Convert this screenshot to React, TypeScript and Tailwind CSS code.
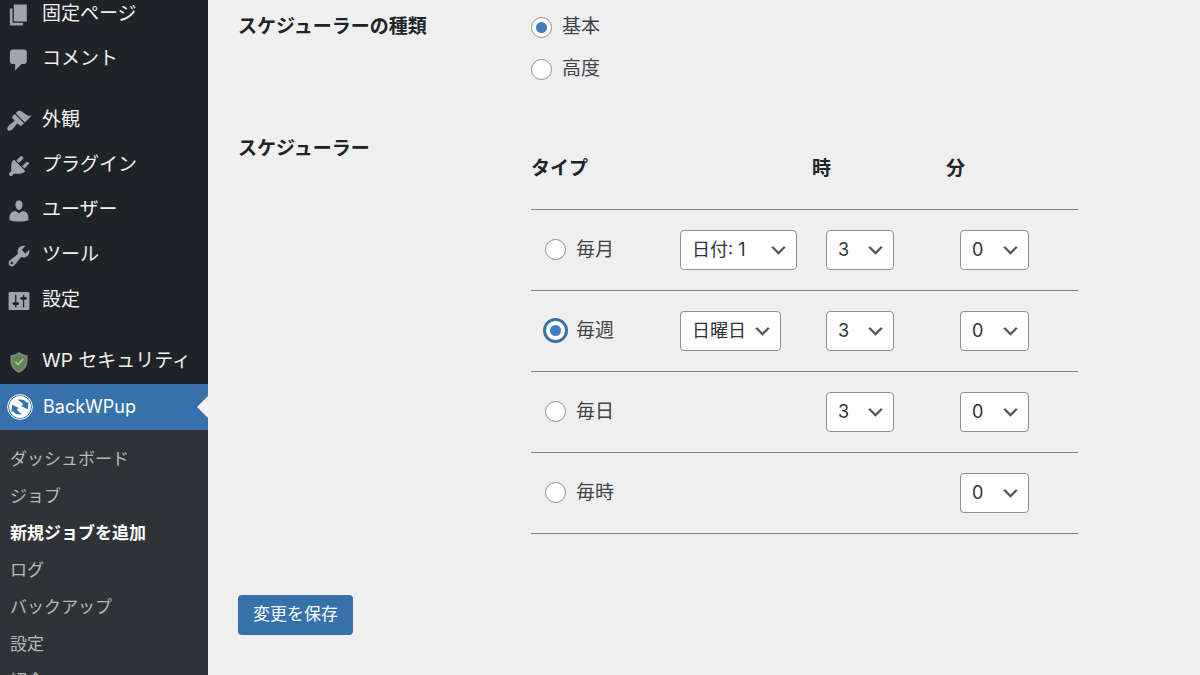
import { type ReactNode } from "react";

const menuFont = "font-['Inter','Noto_Sans_CJK_JP',sans-serif]";

function DashIcon({ d }: { d: string }) {
  return (
    <svg viewBox="0 0 20 20" className="size-[26px] shrink-0 fill-[#a0a5aa]" aria-hidden="true">
      <path d={d} />
    </svg>
  );
}

function ShieldIcon() {
  return (
    <svg viewBox="0 0 26 26" className="size-[26px] shrink-0" aria-hidden="true">
      <path d="M13 3 C10.5 5 7.500 6 4.5 6.2 V12 C4.5 17.5 8 21.5 13 24 C18 21.5 21.5 17.5 21.5 12 V6.2 C18.5 6 15.5 5 13 3Z" fill="#7f868b" />
      <path d="M13 5 C11 6.7 8.7 7.5 6.3 7.8 V12 C6.3 16.5 9 19.8 13 22 C17 19.8 19.7 16.5 19.7 12 V7.8 C17.3 7.5 15 6.7 13 5Z" fill="#5d8848" />
      <path d="M9.5 12.8 L12.2 15.5 L17 10" fill="none" stroke="#b4c6a8" strokeWidth="1.6" />
    </svg>
  );
}

function BackupIcon() {
  const arrow = "M10.5 6 C14.500 4.800 18 6 19.800 8.800 L21.500 8 L20.800 15.200 L14 12 L16.200 10.800 C15.200 8.500 13 7 10.500 6Z";
  return (
    <svg viewBox="0 0 26 26" className="size-[26px] shrink-0" aria-hidden="true">
      <circle cx="13" cy="13" r="12.4" fill="none" stroke="#fff" strokeWidth="1" />
      <circle cx="13" cy="13" r="10.9" fill="#fff" />
      <path d={arrow} fill="#3671ac" />
      <path d={arrow} fill="#3671ac" transform="rotate(180 13 13)" />
    </svg>
  );
}

const icons = {
  page: "M6 15V2h10v13H6zm-1 1h8v2H3V5h2v11z",
  comments: "M5 2h9c1.1 0 2 .9 2 2v7c0 1.1-.9 2-2 2h-2l-5 5v-5H5c-1.1 0-2-.9-2-2V4c0-1.1.9-2 2-2z",
  appearance:
    "M14.48 11.06L7.41 3.99l1.5-1.5c.5-.56 2.3-.47 3.51.32 1.21.8 1.43 1.28 2.91 2.1 1.18.64 2.45 1.26 4.45.85zm-.71.71L6.7 4.7 4.93 6.47c-.39.39-.39 1.02 0 1.41l1.06 1.06c.39.39.39 1.03 0 1.42-.6.6-1.43 1.11-2.21 1.69-.35.26-.7.53-1.01.84C1.43 14.23.4 16.08 1.4 17.07c.99 1 2.84-.03 4.18-1.36.31-.31.58-.66.85-1.02.57-.78 1.08-1.61 1.69-2.21.39-.39 1.02-.39 1.41 0l1.06 1.06c.39.39 1.02.39 1.41 0z",
  plugins:
    "M13.11 4.36L9.87 7.6 8 5.73l3.24-3.24c.35-.34 1.05-.2 1.56.32.52.51.66 1.21.31 1.55zm-8 1.77l.91-1.12 9.01 9.01-1.19.84c-.71.71-2.63 1.16-3.82 1.16H6.14L4.9 17.26c-.59.59-1.54.59-2.12 0-.59-.58-.59-1.53 0-2.12l1.24-1.24v-3.88c0-1.13.4-3.19 1.09-3.89zm7.26 3.97l3.24-3.24c.34-.35 1.04-.21 1.55.31.52.51.66 1.21.31 1.55l-3.24 3.25z",
  users:
    "M10 9.25c-2.27 0-2.73-3.44-2.73-3.44C7 4.02 7.82 2 9.97 2c2.16 0 2.98 2.02 2.71 3.81 0 0-.41 3.44-2.68 3.44zm0 2.57L12.72 10c2.39 0 4.52 2.33 4.52 4.53v2.49s-3.65 1.13-7.24 1.13c-3.65 0-7.24-1.13-7.24-1.13v-2.49c0-2.25 1.94-4.48 4.47-4.48z",
  tools:
    "M16.68 9.77c-1.34 1.34-3.3 1.67-4.95.99l-5.41 6.52c-.99.99-2.59.99-3.58 0s-.99-2.59 0-3.57l6.52-5.42c-.68-1.65-.35-3.61.99-4.95 1.28-1.28 3.12-1.62 4.72-1.06l-2.89 2.89 2.82 2.82 2.86-2.87c.53 1.58.18 3.39-1.08 4.65zM3.81 16.21c.4.39 1.04.39 1.43 0 .4-.4.4-1.04 0-1.43-.39-.4-1.03-.4-1.43 0-.39.39-.39 1.03 0 1.43z",
  settings:
    "M18 16V4c0-.55-.45-1-1-1H3c-.55 0-1 .45-1 1v12c0 .55.45 1 1 1h14c.55 0 1-.45 1-1zM8 11h1c.55 0 1 .45 1 1s-.45 1-1 1H8v1.5c0 .28-.22.5-.5.5s-.5-.22-.5-.5V13H6c-.55 0-1-.45-1-1s.45-1 1-1h1V5.5c0-.28.22-.5.5-.5s.5.22.5.5V11zm5-2h-1c-.55 0-1-.45-1-1s.45-1 1-1h1V5.5c0-.28.22-.5.5-.5s.5.22.5.5V7h1c.55 0 1 .45 1 1s-.45 1-1 1h-1v5.5c0 .28-.22.5-.5.5s-.5-.22-.5-.5V9z",
};

const menuGroups: { label: string; icon: ReactNode }[][] = [
  [
    { label: "固定ページ", icon: <DashIcon d={icons.page} /> },
    { label: "コメント", icon: <DashIcon d={icons.comments} /> },
  ],
  [
    { label: "外観", icon: <DashIcon d={icons.appearance} /> },
    { label: "プラグイン", icon: <DashIcon d={icons.plugins} /> },
    { label: "ユーザー", icon: <DashIcon d={icons.users} /> },
    { label: "ツール", icon: <DashIcon d={icons.tools} /> },
    { label: "設定", icon: <DashIcon d={icons.settings} /> },
  ],
  [{ label: "WP セキュリティ", icon: <ShieldIcon /> }],
];

const submenu = ["ダッシュボード", "ジョブ", "新規ジョブを追加", "ログ", "バックアップ", "設定", "紹介"];

function Sidebar() {
  return (
    <nav className="w-52 shrink-0 overflow-hidden bg-[#1f2327] text-[#f0f0f1]">
      <div className="-mt-2 flex flex-col gap-4">
        {menuGroups.map((group, i) => (
          <ul key={i}>
            {group.map((item) => (
              <li key={item.label}>
                <a href="#" className="flex h-[45px] items-center gap-2.5 pl-1.5 text-[19px] whitespace-nowrap">
                  {item.icon}
                  {item.label}
                </a>
              </li>
            ))}
          </ul>
        ))}
      </div>

      {/* Open plugin menu */}
      <a
        href="#"
        aria-current="true"
        className="relative flex h-[46px] items-center gap-2.5 bg-[#3671ac] pl-[7px] text-lg text-white"
      >
        <BackupIcon />
        BackWPup
        <span className="absolute top-1/2 right-0 size-0 -translate-y-1/2 border-y-11 border-r-11 border-y-transparent border-r-[#efefef]" />
      </a>
      <ul className="h-full bg-[#2f3338] pt-[11px]">
        {submenu.map((label) => (
          <li key={label}>
            <a
              href="#"
              className={`flex h-[37px] items-center pl-2.5 text-[17px] ${
                label === "新規ジョブを追加" ? "font-bold text-white" : "text-[#b4b9be]"
              }`}
            >
              {label}
            </a>
          </li>
        ))}
      </ul>
    </nav>
  );
}

type RadioProps = { name: string; label: string; checked?: boolean; focused?: boolean };

function Radio({ name, label, checked, focused }: RadioProps) {
  return (
    <label className="flex items-center gap-2.5 text-[19px] leading-6 text-[#3c434a]">
      <input
        type="radio"
        name={name}
        defaultChecked={checked}
        className={`grid size-[21px] shrink-0 appearance-none place-items-center rounded-full border bg-white checked:before:size-[11px] checked:before:rounded-full checked:before:bg-[#3f7dc0] checked:before:content-[''] ${
          focused ? "border-[#3671ac] ring-2 ring-[#3671ac]" : "border-[#8c8f94]"
        }`}
      />
      {label}
    </label>
  );
}

function Select({ label, value, width }: { label: string; value: string; width: string }) {
  return (
    <div className={`relative ${width}`}>
      <select
        aria-label={label}
        className="block h-10 w-full appearance-none rounded border border-[#8c8f94] bg-white pl-[11px] text-lg text-[#2c3338]"
      >
        <option>{value}</option>
      </select>
      <svg
        viewBox="0 0 20 20"
        className="pointer-events-none absolute top-2.5 right-2 size-[21px] fill-[#555]"
        aria-hidden="true"
      >
        <path d="M5 6l5 5 5-5 2 1-7 7-7-7 2-1z" />
      </svg>
    </div>
  );
}

const schedules = [
  { label: "毎月", day: "日付: 1", dayWidth: "w-[117px]", hour: "3", minute: "0" },
  { label: "毎週", day: "日曜日", dayWidth: "w-[101px]", hour: "3", minute: "0", active: true },
  { label: "毎日", hour: "3", minute: "0" },
  { label: "毎時", minute: "0" },
];

function ScheduleTable() {
  return (
    <table className="w-full max-w-[547px] table-fixed border-collapse text-left text-[19px]">
      <colgroup>
        <col className="w-[135px]" />
        <col className="w-[146px]" />
        <col className="w-[134px]" />
        <col />
      </colgroup>
      <thead>
        <tr className="h-[81px] border-b border-[#7e8184] text-[#1d2327]">
          <th colSpan={2} className="pt-0.5 font-bold">タイプ</th>
          <th className="pt-0.5 font-bold">時</th>
          <th className="pt-0.5 font-bold">分</th>
        </tr>
      </thead>
      <tbody>
        {schedules.map((row) => (
          <tr key={row.label} className="h-[81px] border-b border-[#7e8184]">
            <td className="pl-3.5">
              <Radio name="cronbtype" label={row.label} checked={row.active} focused={row.active} />
            </td>
            <td className="pl-3.5">
              {row.day && <Select label={`${row.label} 日`} value={row.day} width={row.dayWidth} />}
            </td>
            <td className="pl-3.5">
              {row.hour && <Select label={`${row.label} 時`} value={row.hour} width="w-[68px]" />}
            </td>
            <td className="pl-3.5">
              <Select label={`${row.label} 分`} value={row.minute} width="w-[69px]" />
            </td>
          </tr>
        ))}
      </tbody>
    </table>
  );
}

export default function App() {
  return (
    <div lang="ja" className={`flex h-screen overflow-hidden bg-[#efefef] ${menuFont}`}>
      <Sidebar />
      <main className="min-w-0 flex-1 pl-[30px]">
        <form onSubmit={(e) => e.preventDefault()}>
          <div className="grid grid-cols-[293px_1fr]">
            <h3 className="pt-[15px] text-[19px] leading-6 font-bold text-[#1d2327]">スケジューラーの種類</h3>
            <div className="flex flex-col pt-1.5 pb-8">
              <div className="flex h-[42px] items-center">
                <Radio name="cronselect" label="基本" checked />
              </div>
              <div className="flex h-[42px] items-center">
                <Radio name="cronselect" label="高度" />
              </div>
            </div>

            <h3 className="pt-[15px] text-[19px] leading-6 font-bold text-[#1d2327]">スケジューラー</h3>
            <div className="pt-1.5">
              <ScheduleTable />
            </div>
          </div>

          <button type="submit" className="mt-[61px] h-10 rounded bg-[#3671ac] px-[15px] text-[17px] text-white">
            変更を保存
          </button>
        </form>
      </main>
    </div>
  );
}
